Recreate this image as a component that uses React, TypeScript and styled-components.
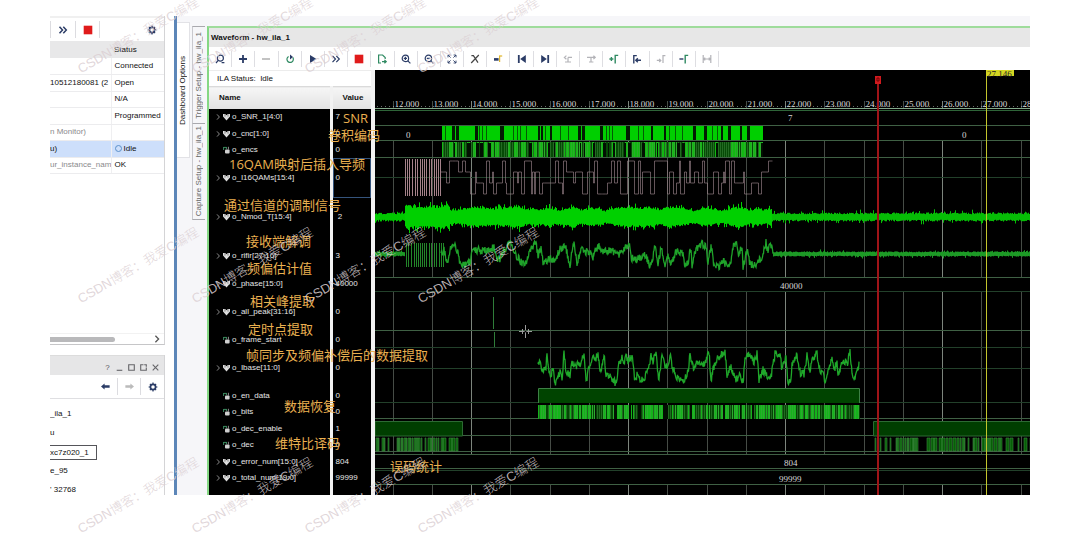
import React from "react";
import styled, { createGlobalStyle, css } from "styled-components";

const GlobalStyle = createGlobalStyle`
  *, *::before, *::after { box-sizing: border-box; }
  body { margin: 0; background: #fff; }
  button { font: inherit; color: inherit; border: 0; padding: 0; background: none; }
  table { border-collapse: collapse; border-spacing: 0; }
`;

const Page = styled.main`
  position: relative;
  overflow: hidden;
  padding: 16px 50px 45px;
  font: 8px/12px "Liberation Sans", Arial, "Noto Sans CJK SC", sans-serif;
  color: #111;
`;
const Frame = styled.div`
  display: flex;
`;

/* ---------- hardware sidebar ---------- */
const Sidebar = styled.aside`
  flex: 0 0 115px;
  display: flex;
  flex-direction: column;
  gap: 10px;
  overflow: hidden;
`;
const Panel = styled.section<{ $grow?: boolean }>`
  display: flex;
  flex-direction: column;
  border-right: 1px solid #d4d4d6;
  border-bottom: ${(p) => (p.$grow ? "0" : "1px solid #c6c6c8")};
  ${(p) => (p.$grow ? "flex: 1;" : "height: 329px;")}
`;
const PanelTools = styled.div`
  display: flex;
  align-items: center;
  height: 25px;
  border-top: 2px solid #f0f0f0;
`;
const ToolButton = styled.button<{ $w: number; $plain?: boolean }>`
  display: grid;
  place-items: center;
  width: ${(p) => p.$w}px;
  height: 17px;
  border-left: ${(p) => (p.$plain ? "0" : "1px solid #dcdce0")};
`;
const Spacer = styled.span`
  flex: 1;
`;
const DeviceTable = styled.table`
  width: 100%;
  table-layout: fixed;
  th {
    height: 17px;
    padding: 0 0 0 3px;
    background: #e8e8e9;
    font-weight: 400;
    text-align: left;
  }
  td {
    padding: 0 0 0 3px;
    border-bottom: 1px solid #ececee;
    line-height: 14px;
    white-space: nowrap;
    overflow: hidden;
  }
  td:first-child { padding: 0; }
  td + td { border-left: 1px solid #efeff1; }
  tr:nth-child(odd) td { height: 16px; }
  tr:nth-child(even) td { height: 17px; }
`;
const DeviceRow = styled.tr<{ $muted?: boolean; $on?: boolean }>`
  ${(p) => p.$on && css`background: #cddffb;`}
  td:first-child { color: ${(p) => (p.$muted ? "#8a8a8c" : "#111")}; }
`;
const IdleDot = styled.span`
  display: inline-block;
  width: 7px;
  height: 7px;
  margin-right: 2px;
  border: 1px solid #5b8fc9;
  border-radius: 50%;
  vertical-align: -1px;
`;
const ScrollTrack = styled.div`
  display: flex;
  align-items: center;
  justify-content: space-between;
  height: 11px;
  margin-top: auto;
  padding-right: 3px;
  border-top: 1px solid #f2f2f2;
`;
const ScrollThumb = styled.span`
  width: 65px;
  height: 5px;
  border-radius: 0 3px 3px 0;
  background: #b9b9bb;
`;
const WindowBar = styled.div`
  display: flex;
  align-items: center;
  justify-content: flex-end;
  gap: 5px;
  height: 20px;
  padding: 4px 5px 0 0;
  background: #e6e6e7;
  border-top: 1px solid #dcdcdc;
`;
const WindowButton = styled.button`
  display: grid;
  place-items: center;
  width: 7px;
  height: 12px;
  color: #55555a;
`;
const PropertyTools = styled.div`
  display: flex;
  align-items: center;
  justify-content: flex-end;
  height: 24px;
  border-bottom: 1px solid #dfdfe2;
`;
const PropertyList = styled.ul`
  display: flex;
  flex-direction: column;
  gap: 11px;
  margin: 0;
  padding: 11px 0 0;
  list-style: none;
  line-height: 8px;
  white-space: nowrap;
  li {
    display: flex;
    align-items: center;
    height: 8px;
  }
`;
const PartBox = styled.input`
  width: 47px;
  height: 15px;
  padding: 0;
  border: 1px solid #55555a;
  border-left: 0;
  background: #fff;
  color: #111;
  font: inherit;
`;

/* ---------- dashboard tabs ---------- */
const Dashboard = styled.section`
  flex: 1;
  min-width: 0;
  display: flex;
  margin-left: 9px;
  border-left: 3px solid #5c86b8;
  background: #f6f6f9;
`;
const SideText = styled.span`
  writing-mode: vertical-rl;
  transform: rotate(180deg);
  white-space: nowrap;
`;
const OptionsTab = styled.button`
  display: grid;
  place-items: center;
  width: 13px;
  height: 136px;
  margin-top: 6px;
  background: #fff;
  border: 1px solid #e2e2e6;
  border-left: 0;
  line-height: 12px;
`;
const SetupTabs = styled.div`
  display: flex;
  flex-direction: column;
  width: 17px;
  padding: 10px 2px 0;
`;
const SetupTab = styled.button`
  display: grid;
  place-items: center;
  height: 97px;
  border-top: 1px solid #a9a9ae;
  border-left: 1px solid #c9c9ce;
  color: #666;
  &:last-child { border-bottom: 1px solid #a9a9ae; }
`;

/* ---------- waveform window ---------- */
const WaveWindow = styled.section`
  position: relative;
  flex: 1;
  min-width: 0;
  margin-top: 10px;
  border-top: 2px solid #9fdc9c;
  border-left: 2px solid #85d884;
  background: #fff;
`;
const WaveTitle = styled.h1`
  margin: 0;
  height: 19px;
  padding-left: 2px;
  background: #e7e7e7;
  font-size: 8px;
  line-height: 19px;
  font-weight: 700;
`;
const WaveTools = styled.div`
  display: flex;
  width: 510px;
  height: 23px;
  align-items: center;
`;
const WaveTool = styled.button`
  flex: 1;
  display: grid;
  place-items: center;
  height: 16px;
  border-right: 1px solid #dedee2;
`;
const WaveBody = styled.div`
  display: flex;
  background: #000;
`;
const SignalPane = styled.div`
  flex: 0 0 166px;
  border-right: 4px solid #f2f2f2;
`;
const IlaStatus = styled.div`
  height: 16px;
  padding-left: 8px;
  background: #fff;
  border-top: 1px solid #ececec;
  line-height: 15px;
  white-space: pre;
`;
const SignalTable = styled.table`
  width: 100%;
  table-layout: fixed;
  color: #e6e6e6;
  th {
    height: 22px;
    padding: 0 0 0 10px;
    background: linear-gradient(#f6f6f6, #e2e2e2);
    color: #111;
    text-align: left;
    font-weight: 700;
    border-top: 1px solid #dadada;
  }
  th:first-child, td:first-child { border-right: 3px solid #f2f2f2; }
  td { padding: 0 0 0 3px; line-height: 12px; white-space: nowrap; }
  tbody tr:last-child td { padding-bottom: 8px; }
`;
const SignalRow = styled.tr<{ $h: number; $picked?: boolean }>`
  height: ${(p) => p.$h}px;
  ${(p) => p.$picked && css`td + td { box-shadow: inset 0 0 0 1px #35547c; }`}
`;
const SignalName = styled.span`
  display: flex;
  align-items: center;
  gap: 2px;
  padding-left: 2px;
  svg { flex: none; }
`;
const Plot = styled.svg`
  flex: 1;
  min-width: 0;
  width: 100%;
  height: 425px;
  display: block;
`;
const Note = styled.span<{ $x: number; $y: number }>`
  position: absolute;
  left: ${(p) => p.$x}px;
  top: ${(p) => p.$y}px;
  font: 13px/16px "Open Sans", "Noto Sans CJK SC", sans-serif;
  color: #eab050;
  white-space: nowrap;
`;
const Watermark = styled.span<{ $x: number; $y: number }>`
  position: absolute;
  left: ${(p) => p.$x}px;
  top: ${(p) => p.$y}px;
  font: 300 13px/16px "Liberation Sans", "Noto Sans CJK SC", sans-serif;
  color: rgba(219, 207, 211, 0.85);
  transform: rotate(-30deg);
  transform-origin: 0 100%;
  white-space: nowrap;
  pointer-events: none;
`;

/* ---------- icons ---------- */
const NAVY = "#2b3c66";
const Svg = ({ s = 10, c = NAVY, children }: { s?: number; c?: string; children: React.ReactNode }) => (
  <svg width={s} height={s} viewBox="0 0 10 10" fill="none" stroke={c} strokeWidth="1.2" aria-hidden="true">
    {children}
  </svg>
);
const Gear = () => (
  <Svg>
    <circle cx="5" cy="5" r="2.6" strokeWidth="1.7" />
    <path d="M5 .6v1.6M5 7.8v1.6M.6 5h1.6M7.8 5h1.6M1.9 1.9l1.1 1.1M7 7l1.1 1.1M8.1 1.9L7 3M3 7L1.9 8.1" />
  </Svg>
);
const Stop = () => (
  <Svg>
    <rect x=".7" y=".7" width="8.6" height="8.6" fill="#e01b1b" stroke="none" />
  </Svg>
);
const Forward = () => (
  <Svg>
    <path d="M1.5 1.8L4.5 5l-3 3.2M5.3 1.8l3 3.2-3 3.2" strokeWidth="1.5" />
  </Svg>
);
const GREEN = "#2f8a62";
const GRAY = "#b3b3b8";
const waveTools: [string, React.ReactNode][] = [
  ["Search", <Svg><circle cx="5.4" cy="4.2" r="3" /><path d="M3.2 6.4L1 9M6.6 8.6h2.8" /></Svg>],
  ["Add", <Svg><path d="M5 1v8M1 5h8" strokeWidth="1.8" /></Svg>],
  ["Remove", <Svg c="#aaa"><path d="M1 5h8" strokeWidth="1.4" /></Svg>],
  ["Auto re-trigger", <Svg c={GREEN}><path d="M7.8 3.4A3.2 3.2 0 1 1 3.6 2.4" /><path d="M5 .6v4.8l3-2.4z" fill={NAVY} stroke="none" /></Svg>],
  ["Run trigger", <Svg><path d="M2 1l6.5 4L2 9z" fill={NAVY} stroke="none" /></Svg>],
  ["Run immediate", <Svg><path d="M1.5 1.8L4.5 5l-3 3.2M5.3 1.8l3 3.2-3 3.2" /></Svg>],
  ["Stop", <Stop />],
  ["Export", <Svg c={GREEN}><path d="M4 9H1.6V1h4l2.6 2.6V5" /><path d="M5 7.6h4M7.4 6l1.8 1.6-1.8 1.6" /></Svg>],
  ["Zoom in", <Svg><circle cx="4.4" cy="4.4" r="3.2" /><path d="M6.8 6.8L9.4 9.4M2.8 4.4H6M4.4 2.8V6" /></Svg>],
  ["Zoom out", <Svg><circle cx="4.4" cy="4.4" r="3.2" /><path d="M6.8 6.8L9.4 9.4M2.8 4.4H6" /></Svg>],
  ["Zoom fit", <Svg><path d="M1 3.4V1h2.4M6.6 1H9v2.4M9 6.6V9H6.6M3.4 9H1V6.6M1 1l2.6 2.6M9 1L6.4 3.6M9 9L6.4 6.4M1 9l2.6-2.6" strokeWidth=".9" /></Svg>],
  ["Zoom to cursor", <Svg c="#444"><path d="M1.4 1.6h2L8 8.6M8.8 1L1.2 9" /></Svg>],
  ["Go to cursor", <Svg><path d="M1 5.4h4.6" strokeWidth="2.6" /><path d="M6.6 1.6v6.4" stroke="#e0b62e" /><path d="M6.6 2h2.6" stroke="#e0b62e" /></Svg>],
  ["First", <Svg><path d="M1.8 1v8" strokeWidth="1.8" /><path d="M8.8 1v8L3.2 5z" fill={NAVY} stroke="none" /></Svg>],
  ["Last", <Svg><path d="M8.2 1v8" strokeWidth="1.8" /><path d="M1.2 1v8l5.6-4z" fill={NAVY} stroke="none" /></Svg>],
  ["Previous transition", <Svg c={GRAY}><path d="M2 8h6M5 3.4h4M5 8V3.4M3.4 1.6L1.4 3.4l2 1.8" /></Svg>],
  ["Next transition", <Svg c={GRAY}><path d="M1 3.4h8M3 8h4.4M7.4 1.8l1.8 1.6-1.8 1.8M5 3.4V8" /></Svg>],
  ["Add marker", <Svg c={GREEN}><path d="M.4 5h4M2.4 3v4M6.2 9.4V1.4h3" strokeWidth="1.4" /></Svg>],
  ["Previous marker", <Svg><path d="M1.8 9.4V1.6h3M9 6.2H4M5.8 4.2L3.8 6.2l2 2" strokeWidth="1.4" /></Svg>],
  ["Next marker", <Svg c={GRAY}><path d="M.8 6.4h3.8M3.2 4.8l1.6 1.6-1.6 1.6M7 9V1.6h2.4" /></Svg>],
  ["Remove marker", <Svg c={GREEN}><path d="M6.2 9.4V1.4h3" strokeWidth="1.4" /><path d="M.4 5h4" stroke={NAVY} strokeWidth="1.4" /></Svg>],
  ["Swap cursors", <Svg c={GRAY}><path d="M1.2 1v8M8.8 1v8M1.6 5h6.8M3.2 3.6L1.8 5l1.4 1.4M6.8 3.6L8.2 5 6.8 6.4" /></Svg>],
];

const BusIcon = () => (
  <svg width="16" height="8" viewBox="0 0 16 8" aria-hidden="true">
    <path d="M3 1.4l2.4 2.6L3 6.6" fill="none" stroke="#8a8a8a" />
    <path d="M9 1h2.2l1.3 1.2L13.8 1H16v2.4L12.5 7.4 9 3.4z" fill="#dedede" />
    <path d="M11 1.2v2.4M14 1.2v2.4" stroke="#555" strokeWidth=".7" />
  </svg>
);
const BitIcon = () => (
  <svg width="16" height="8" viewBox="0 0 16 8" aria-hidden="true">
    <path d="M9.6 1v3M9.6 1.4h3M12.4 1v2" fill="none" stroke="#3d8b60" />
    <rect x="11" y="3.4" width="4.6" height="4" rx="1" fill="#cfcfcf" />
    <path d="M14.4 .8v3" stroke="#8a8a8a" />
  </svg>
);

/* ---------- data ---------- */
type Signal = { name: string; value: string; h: number; bit?: boolean; picked?: boolean };
const signals: Signal[] = [
  { name: "o_SNR_1[4:0]", value: "7", h: 17 },
  { name: "o_cnc[1:0]", value: "0", h: 16 },
  { name: "o_encs", value: "0", h: 16, bit: true },
  { name: "o_I16QAMs[15:4]", value: "0", h: 40, picked: true },
  { name: "o_Nmod_T[15:4]", value: "\u00a02", h: 39 },
  { name: "o_rifir[27:16]", value: "3", h: 39 },
  { name: "o_phase[15:0]", value: "40000", h: 16 },
  { name: "o_all_peak[31:16]", value: "0", h: 40 },
  { name: "o_frame_start", value: "0", h: 16, bit: true },
  { name: "o_Ibase[11:0]", value: "0", h: 40 },
  { name: "o_en_data", value: "0", h: 16, bit: true },
  { name: "o_bits", value: "0", h: 17, bit: true },
  { name: "o_dec_enable", value: "1", h: 16, bit: true },
  { name: "o_dec", value: "0", h: 17, bit: true },
  { name: "o_error_num[15:0]", value: "804", h: 16 },
  { name: "o_total_num[19:0]", value: "99999", h: 25 },
];

const notes: [string, number, number][] = [
  ["SNR", 134, 82],
  ["卷积编码", 119, 99],
  ["16QAM映射后插入导频", 20, 128],
  ["通过信道的调制信号", 15, 169],
  ["接收端解调", 37, 205],
  ["频偏估计值", 38, 232],
  ["相关峰提取", 41, 265],
  ["定时点提取", 39, 293],
  ["帧同步及频偏补偿后的数据提取", 37, 319],
  ["数据恢复", 75, 370],
  ["维特比译码", 66, 407],
  ["误码统计", 181, 430],
];

const watermarkRows = [61, 291, 521];
const watermarkColumns = [83, 197, 310, 423];

/* ---------- waveform drawing ---------- */
const rng = (seed: number) => () => {
  seed = (seed * 1664525 + 1013904223) % 4294967296;
  return seed / 4294967296;
};

const noiseBand = (x0: number, x1: number, cy: number, amp: number, seed: number) => {
  const r = rng(seed);
  const reach = () => amp * (0.55 + 0.35 * r() + (r() > 0.88 ? 0.7 * r() : 0));
  let d = "";
  for (let x = x0; x < x1; x++) {
    d += `M${x + 0.5} ${(cy - reach()).toFixed(1)}V${(cy + reach()).toFixed(1)}`;
  }
  return d;
};
const burst = (x0: number, x1: number, cy: number, seed: number) => {
  const r = rng(seed);
  const knots = Array.from({ length: 60 }, () => 7 + r() * 5.5);
  const reach = (s: number) => s * (0.75 + 0.25 * r() + (r() > 0.8 ? 0.4 * r() : 0));
  let d = "";
  for (let x = x0; x < x1; x++) {
    const t = (x - x0) / 8;
    const i = Math.floor(t);
    const swell = x < 450 ? 12 : knots[i] + (knots[i + 1] - knots[i]) * (t - i);
    d += `M${x + 0.5} ${(cy - reach(swell)).toFixed(1)}V${(cy + reach(swell)).toFixed(1)}`;
  }
  return d;
};
const rough = (points: number[], seed: number) => {
  const r = rng(seed);
  let d = `M${points[0]} ${points[1]}`;
  for (let i = 2; i < points.length; i += 2) {
    const [px, py, x, y] = [points[i - 2], points[i - 1], points[i], points[i + 1]];
    const n = Math.max(2, Math.round((x - px) * 2));
    for (let k = 1; k <= n; k++) {
      const t = k / n;
      d += `L${(px + (x - px) * t).toFixed(1)} ${(py + (y - py) * t + (r() - 0.5) * 8).toFixed(1)}`;
    }
  }
  return d;
};
const bars = (x0: number, x1: number, y0: number, y1: number, density: number, seed: number) => {
  const r = rng(seed);
  let d = "";
  for (let x = x0; x < x1; ) {
    const w = 1 + Math.floor(r() * 3);
    if (r() < density) d += `M${x} ${y0}h${Math.min(w, x1 - x)}V${y1}h${-Math.min(w, x1 - x)}z`;
    x += w + (r() < 0.5 ? 1 : 0);
  }
  return d;
};
const steps = (x0: number, x1: number, seed: number) => {
  const r = rng(seed);
  const levels = [161, 172, 183, 194];
  let d = `M${x0} 172`;
  let x = x0;
  while (x < x1) {
    x = Math.min(x1, x + [1, 1, 2, 2, 3, 3, 4, 7][Math.floor(r() * 8)]);
    d += `H${x + 0.5}V${levels[Math.floor(r() * 4)]}`;
  }
  return d;
};
const comb = (x0: number, x1: number, y0: number, y1: number, seed: number) => {
  const r = rng(seed);
  let d = "";
  for (let x = x0; x < x1; x += r() < 0.75 ? 2 : 3) d += `M${x + 0.5} ${y0}V${y1}`;
  return d;
};

const rifir = [
  441, 253, 444, 250, 446, 258, 448, 262, 451, 246, 454, 243, 457, 250, 460, 264, 466, 265, 470, 262, 473, 250, 480, 250,
  486, 251, 490, 250, 494, 247, 497, 262, 500, 258, 503, 250, 508, 245, 510, 241, 514, 250, 517, 257, 521, 262, 525, 266,
  528, 255, 530, 248, 532, 250, 536, 242, 538, 256, 541, 250, 543, 262, 546, 262, 550, 258, 554, 263, 557, 256, 560, 248,
  563, 250, 565, 243, 568, 258, 570, 266, 572, 250, 574, 243, 577, 262, 581, 250, 584, 252, 589, 252, 593, 258, 596, 250,
  599, 246, 603, 254, 608, 250, 614, 252, 618, 256, 622, 252, 626, 246, 629, 243, 631, 258, 636, 260, 641, 258, 646, 255,
  648, 262, 650, 268, 653, 256, 655, 246, 658, 264, 661, 248, 665, 264, 668, 254, 671, 264, 676, 252, 682, 251, 685, 266,
  688, 262, 691, 248, 692, 266, 695, 250, 698, 247, 702, 244, 706, 247, 708, 262, 711, 246, 714, 264, 719, 266, 724, 262,
  728, 268, 731, 260, 733, 246, 736, 242, 738, 254, 742, 246, 743, 268, 747, 250, 750, 264, 755, 266, 758, 258, 762, 262,
  764, 250, 766, 243, 768, 252, 770, 242, 773, 254,
];
const ibase = [
  538, 364, 541, 363, 542, 372, 546, 370, 547, 353, 550, 376, 553, 369, 555, 383, 560, 372, 562, 380, 564, 354, 566, 370,
  570, 376, 572, 363, 576, 366, 580, 364, 584, 353, 586, 382, 589, 368, 592, 358, 596, 360, 598, 352, 600, 374, 604, 354,
  606, 374, 610, 376, 615, 382, 617, 380, 619, 364, 622, 356, 624, 365, 626, 352, 628, 362, 632, 356, 635, 383, 638, 372,
  641, 382, 645, 376, 649, 368, 651, 356, 653, 362, 656, 354, 659, 380, 662, 356, 665, 366, 668, 368, 670, 352, 672, 366,
  676, 376, 680, 380, 684, 380, 688, 372, 690, 354, 693, 368, 697, 364, 702, 366, 706, 362, 709, 352, 711, 382, 713, 370,
  716, 360, 720, 356, 725, 352, 727, 374, 731, 366, 735, 380, 740, 376, 743, 383, 745, 358, 750, 354, 754, 362, 757, 354,
  759, 382, 763, 370, 768, 378, 771, 376, 773, 366, 775, 354, 780, 354, 782, 370, 786, 356, 788, 382, 791, 380, 792, 364,
  797, 354, 799, 372, 804, 374, 807, 356, 810, 372, 813, 358, 817, 354, 820, 372, 823, 372, 825, 382, 828, 368, 832, 358,
  834, 370, 837, 362, 838, 374, 844, 360, 847, 364, 850, 352, 852, 372, 855, 380, 857, 372, 859, 364,
];
/* start and width of the idle gaps in the coded stream */
const codeGaps = [
  [445, 1], [452, 3], [456, 3], [475, 3], [479, 1], [482, 1], [486, 1], [500, 4], [513, 1], [517, 1], [520, 1], [526, 1],
  [538, 2], [541, 2], [545, 1], [550, 2], [560, 1], [568, 1], [578, 3], [582, 3], [600, 3], [606, 1], [609, 1], [612, 1],
  [626, 4], [638, 1], [643, 1], [651, 2], [664, 2], [669, 1], [675, 1], [682, 1], [693, 3], [704, 3], [712, 1], [717, 1],
  [721, 2], [728, 3], [740, 2], [747, 3],
];

const gridX = Array.from({ length: 17 }, (_, k) => Math.round(392.5 + 39.25 * k) + 0.5);
const RIGHT = 4000;

const WavePlot = () => (
  <Plot role="img" aria-label="Captured waveforms">
    <g transform="translate(-375 -70)">
      {gridX.map((x, k) => (
        <path
          key={x}
          d={`M${x} 101V109M${x} 141V277M${x} 291V454M${x} 485V495`}
          stroke={k % 4 === 2 ? "#7d857d" : "#464c46"}
        />
      ))}
      <path d={`M375 108.5H${RIGHT}`} stroke="#83a98a" />
      <path d={`M375 110.5H${RIGHT}`} stroke="#2e6438" />
      <path d={`M377 106.5H${RIGHT}`} stroke="#cfd8cf" strokeDasharray="1 3" opacity=".5" />
      <path
        d={[125, 140, 157, 277, 330, 418, 435, 451, 454, 468, 484].map((y) => `M375 ${y}.5H${RIGHT}`).join("")}
        stroke="#3f6044"
      />
      <path d={[177, 291, 347, 368, 402, 470].map((y) => `M375 ${y}.5H${RIGHT}`).join("")} stroke="#22402a" />
      <g fill="#d6d6d6" fontFamily="Liberation Serif" fontSize="9">
        {gridX.map((x, k) => (
          <text key={x} x={x + 1} y="107">{`${12 + k}.000`}</text>
        ))}
        <text x="788" y="121">7</text>
        <text x="406" y="138">0</text>
        <text x="962" y="138">0</text>
        <text x="780" y="289">40000</text>
        <text x="784" y="466">804</text>
        <text x="779" y="482">99999</text>
      </g>

      <rect x="442" y="126" width="321" height="14" fill="#00cf00" />
      {codeGaps.map(([x, w]) => (
        <rect key={x} x={x} y="126" width={w} height="14" fill={w > 1 ? "#031b03" : "#045a04"} />
      ))}
      <rect x="442" y="142" width="321" height="15" fill="#064a06" />
      <path d={bars(442, 763, 142, 157, 0.62, 11)} fill="#12b812" />
      <path d={comb(443, 763, 142, 157, 5)} stroke="#4f9c4f" opacity=".4" />
      <path d={bars(442, 763, 143, 157, 0.1, 23)} fill="#021002" />

      <path d={comb(405, 441, 159, 196, 3)} stroke="#a5828a" />
      <path d={steps(441, 772, 77)} fill="none" stroke="#a08890" opacity=".62" />

      <path d={noiseBand(375, 405, 217, 5, 8)} stroke="#00c800" />
      <path d={burst(405, 772, 217, 4)} stroke="#00d000" />
      <path d={noiseBand(772, 1900, 217, 5, 9)} stroke="#06bc06" />

      <path d={noiseBand(375, 405, 254, 3, 18)} stroke="#1d9a26" />
      <path d={comb(406, 446, 243, 267, 41)} stroke="#23852a" />
      <path d={rough(rifir, 6)} fill="none" stroke="#1fa32a" strokeWidth="1.3" />
      <path d={noiseBand(773, 1900, 254, 3, 19)} stroke="#1d9a26" />

      <path d="M493.5 297V329M494.5 332V347" stroke="#2f7d39" />

      <path d={rough(ibase, 15)} fill="none" stroke="#1fa82a" strokeWidth="1.3" />
      <path d="M538.5 403V388.5H859.5V403" fill="#004400" stroke="#3d8045" />
      <rect x="538" y="405" width="322" height="14" fill="#054505" />
      <path d={bars(538, 860, 405, 419, 0.6, 31)} fill="#14b41a" />
      <path d={comb(539, 860, 405, 419, 32)} stroke="#4f9c4f" opacity=".4" />
      <path d={bars(538, 860, 405, 419, 0.1, 33)} fill="#021002" />

      <path d={`M375 421.5H462.5V436H375zM873.5 436V421.5H${RIGHT}V436z`} fill="#003e00" stroke="#2c6a33" />
      <path d={bars(375, 458, 438, 451, 0.65, 51)} fill="#075f07" stroke="#3c8a42" strokeWidth=".6" />
      <path d={bars(875, 1900, 438, 451, 0.65, 53)} fill="#075f07" stroke="#3c8a42" strokeWidth=".6" />

      <path d="M519 331.5h13M525.5 325v13M522.5 329v5M528.5 329v5" stroke="#9a9a9a" />
      <circle cx="525.5" cy="331.5" r="1" fill="#000" />

      <path d="M878 84V495" stroke="#a01418" strokeWidth="2" />
      <rect x="875" y="76" width="6" height="8" fill="#d01a1e" />
      <path d="M877 78h2v3h-2z" fill="none" stroke="#5a0000" strokeWidth=".8" />
      <path d="M986.5 70V495" stroke="#c3c52c" />
      <rect x="986" y="70" width="28" height="6" fill="#d4d622" />
      <text x="987" y="77" fontFamily="Liberation Serif" fontSize="9" fill="#222">27,146</text>
    </g>
  </Plot>
);

export default function App() {
  return (
    <Page>
      <GlobalStyle />
      <Frame>
        <Sidebar>
          <Panel>
            <PanelTools>
              <ToolButton $w={25} aria-label="Run"><Forward /></ToolButton>
              <ToolButton $w={24} aria-label="Stop"><Stop /></ToolButton>
              <ToolButton $w={23} aria-label="More" />
              <Spacer />
              <ToolButton $w={24} $plain aria-label="Settings"><Gear /></ToolButton>
            </PanelTools>
            <DeviceTable>
              <colgroup><col style={{ width: "61px" }} /><col /></colgroup>
              <thead><tr><th aria-label="Name" /><th>Status</th></tr></thead>
              <tbody>
                <DeviceRow><td /><td>Connected</td></DeviceRow>
                <DeviceRow><td>10512180081 (2</td><td>Open</td></DeviceRow>
                <DeviceRow><td /><td>N/A</td></DeviceRow>
                <DeviceRow><td /><td>Programmed</td></DeviceRow>
                <DeviceRow $muted><td>n Monitor)</td><td /></DeviceRow>
                <DeviceRow $on><td>u)</td><td><IdleDot />Idle</td></DeviceRow>
                <DeviceRow $muted><td>ur_instance_nam</td><td>OK</td></DeviceRow>
              </tbody>
            </DeviceTable>
            <ScrollTrack>
              <ScrollThumb />
              <Svg s={8} c="#555"><path d="M3 1l4 4-4 4" strokeWidth="1.6" /></Svg>
            </ScrollTrack>
          </Panel>
          <Panel $grow>
            <WindowBar>
              <WindowButton aria-label="Help">?</WindowButton>
              <WindowButton aria-label="Minimize"><Svg s={7} c="#66666a"><path d="M1 9h8" strokeWidth="1.6" /></Svg></WindowButton>
              <WindowButton aria-label="Maximize"><Svg s={7} c="#66666a"><path d="M1 1h8v8H1z" strokeWidth="1.6" /></Svg></WindowButton>
              <WindowButton aria-label="Float"><Svg s={7} c="#66666a"><path d="M5 1H1v8h8V5M6 1h3v3" strokeWidth="1.6" /></Svg></WindowButton>
              <WindowButton aria-label="Close"><Svg s={7} c="#66666a"><path d="M1 1l8 8M9 1L1 9" strokeWidth="1.6" /></Svg></WindowButton>
            </WindowBar>
            <PropertyTools>
              <ToolButton $w={23} $plain aria-label="Back"><Svg s={9}><path d="M0 5l4-3.4v2h5.6v2.8H4v2z" fill={NAVY} stroke="none" /></Svg></ToolButton>
              <ToolButton $w={23} aria-label="Forward"><Svg s={9}><path d="M10 5L6 1.6v2H.4v2.8H6v2z" fill="#bbb" stroke="none" /></Svg></ToolButton>
              <ToolButton $w={24} aria-label="Settings"><Gear /></ToolButton>
            </PropertyTools>
            <PropertyList>
              <li>_ila_1</li>
              <li>u</li>
              <li><PartBox aria-label="Part" defaultValue="xc7z020_1" /></li>
              <li>e_95</li>
              <li>' 32768</li>
            </PropertyList>
          </Panel>
        </Sidebar>

        <Dashboard>
          <OptionsTab><SideText>Dashboard Options</SideText></OptionsTab>
          <SetupTabs>
            <SetupTab><SideText>Trigger Setup - hw_ila_1</SideText></SetupTab>
            <SetupTab><SideText>Capture Setup - hw_ila_1</SideText></SetupTab>
          </SetupTabs>
          <WaveWindow>
            <WaveTitle>Waveform - hw_ila_1</WaveTitle>
            <WaveTools>
              {waveTools.map(([label, icon]) => (
                <WaveTool key={label} aria-label={label}>{icon}</WaveTool>
              ))}
            </WaveTools>
            <WaveBody>
              <SignalPane>
                <IlaStatus>{"ILA Status:  Idle"}</IlaStatus>
                <SignalTable>
                  <colgroup><col style={{ width: "122px" }} /><col /></colgroup>
                  <thead><tr><th>Name</th><th>Value</th></tr></thead>
                  <tbody>
                    {signals.map((s) => (
                      <SignalRow key={s.name} $h={s.h} $picked={s.picked}>
                        <td><SignalName>{s.bit ? <BitIcon /> : <BusIcon />}{s.name}</SignalName></td>
                        <td>{s.value}</td>
                      </SignalRow>
                    ))}
                  </tbody>
                </SignalTable>
              </SignalPane>
              <WavePlot />
            </WaveBody>
            {notes.map(([text, x, y]) => (
              <Note key={text} $x={x} $y={y}>{text}</Note>
            ))}
          </WaveWindow>
        </Dashboard>
      </Frame>
      {watermarkRows.map((y) =>
        watermarkColumns.map((x) => (
          <Watermark key={`${x}-${y}`} $x={x} $y={y}>CSDN博客：我爱C编程</Watermark>
        ))
      )}
    </Page>
  );
}
